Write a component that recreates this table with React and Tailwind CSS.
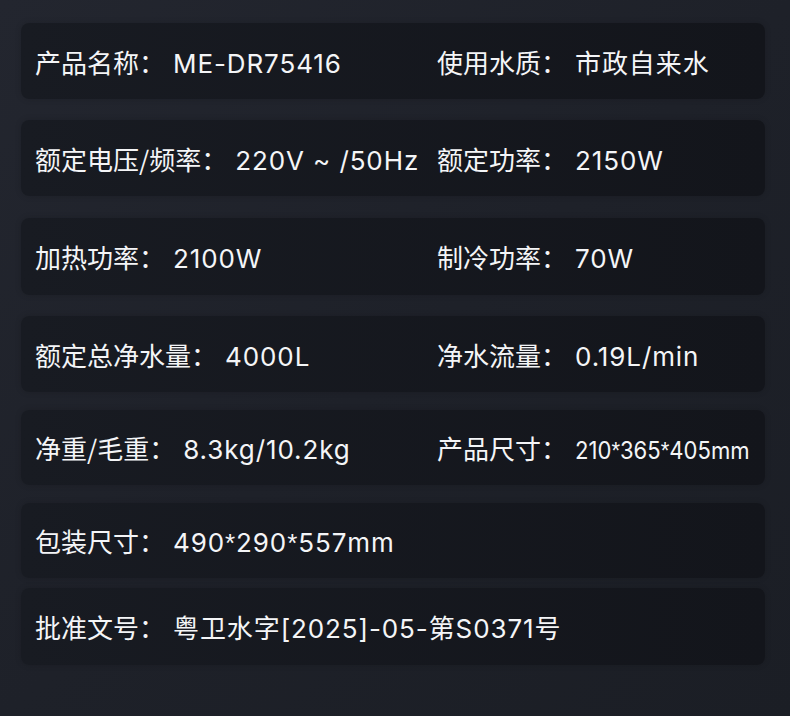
import React from "react";

const font = { fontFamily: 'Inter, "Noto Sans CJK SC", sans-serif' };

function Star() {
  return <span style={{ fontFamily: '"Liberation Sans", sans-serif' }}>*</span>;
}

function Item({ label, children, small }) {
  return (
    <span>
      <span style={{ fontFamily: '"Noto Sans CJK SC", sans-serif' }}>{label}：</span>
      {small ? (
        <span className="ml-[8px] inline-block origin-left scale-x-[0.92] text-[24px]">{children}</span>
      ) : (
        <span className="ml-[8px] tracking-[0.9px]">{children}</span>
      )}
    </span>
  );
}

function Card({ mt, left, right, h = "h-[76px]" }) {
  return (
    <div className={`${mt} ${h} flex items-center rounded-lg bg-gradient-to-r from-[#181b22] to-[#13151b] text-[#f4f5f7] shadow-[0_0_6px_rgba(0,0,0,0.15)]`}>
      <div className="w-[416px] shrink-0 pl-[14px] pt-[3px] text-[26px] leading-none whitespace-nowrap">{left}</div>
      <div className="flex-1 pt-[3px] text-[26px] leading-none whitespace-nowrap">{right}</div>
    </div>
  );
}

export default function App() {
  return (
    <div
      className="w-[790px] h-[716px] overflow-hidden bg-gradient-to-br from-[#23262f] via-[#1e2129] to-[#1b1e25] px-[21px] pt-[23px] box-border"
      style={font}
    >
      <div className="w-[744px]">
        <Card
          mt="mt-0"
          left={<Item label="产品名称">ME-DR75416</Item>}
          right={<Item label="使用水质">市政自来水</Item>}
        />
        <Card
          mt="mt-[21px]"
          left={<Item label="额定电压/频率">220V ~ /50Hz</Item>}
          right={<Item label="额定功率">2150W</Item>}
        />
        <Card
          mt="mt-[22px]"
          h="h-[77px]"
          left={<Item label="加热功率">2100W</Item>}
          right={<Item label="制冷功率">70W</Item>}
        />
        <Card
          mt="mt-[21px]"
          left={<Item label="额定总净水量">4000L</Item>}
          right={<Item label="净水流量">0.19L/min</Item>}
        />
        <Card
          mt="mt-[18px]"
          h="h-[75px]"
          left={<Item label="净重/毛重">8.3kg/10.2kg</Item>}
          right={
            <Item label="产品尺寸" small>
              210<Star />365<Star />405mm
            </Item>
          }
        />
        <Card
          mt="mt-[18px]"
          h="h-[75px]"
          left={
            <Item label="包装尺寸">
              490<Star />290<Star />557mm
            </Item>
          }
          right=""
        />
        <Card
          mt="mt-[10px]"
          h="h-[77px]"
          left={<Item label="批准文号">粤卫水字[2025]-05-第S0371号</Item>}
          right=""
        />
      </div>
    </div>
  );
}
